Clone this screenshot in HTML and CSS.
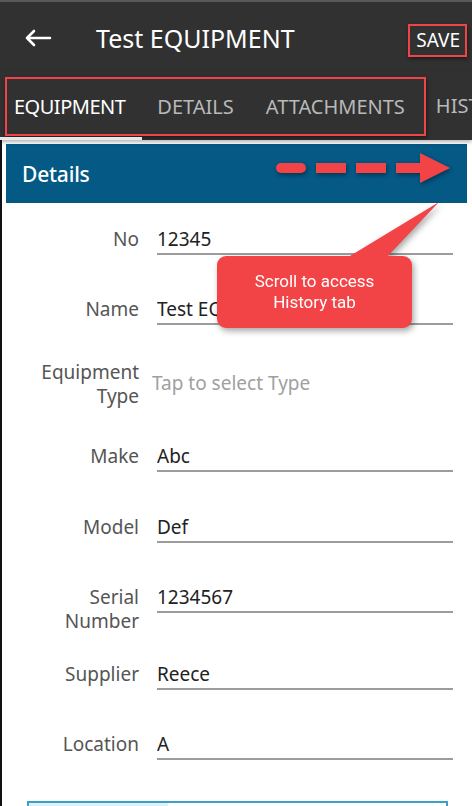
FILE: index.html
```html
<!DOCTYPE html>
<html lang="en">
<head>
  <meta charset="UTF-8" />
  <meta name="viewport" content="width=device-width, initial-scale=1.0"/>
  <title>Test EQUIPMENT</title>
  <link rel="stylesheet" href="styles.css">
</head>
<body>
  <header class="appbar">
    <svg class="back" width="28" height="20" viewBox="0 0 28 20">
      <path d="M3 10H26M10 3L3 10L10 17" fill="none" stroke="#fff" stroke-width="2.6" stroke-linecap="round" stroke-linejoin="round"/>
    </svg>
    <h1 class="title">Test EQUIPMENT</h1>
    <button class="save">SAVE</button>
  </header>

  <nav class="tabs">
    <div class="tabs-marked">
      <span class="tab active">EQUIPMENT</span>
      <span class="tab">DETAILS</span>
      <span class="tab">ATTACHMENTS</span>
    </div>
    <span class="tab">HISTORY</span>
    <div class="indicator"></div>
  </nav>

  <main class="content">
    <section class="panel">
      <h2>Details</h2>
      <svg class="hint-arrow" width="190" height="59" viewBox="0 0 190 59">
        <g fill="#f24346">
          <rect x="6" y="19" width="30" height="10" rx="5"/>
          <rect x="46" y="19" width="30" height="10"/>
          <rect x="86" y="19" width="30" height="10"/>
          <rect x="126" y="19" width="26" height="10"/>
          <polygon points="150,9 180,24 150,39"/>
        </g>
      </svg>
    </section>

    <div class="callout">
      <svg class="callout-tail" width="100" height="60" viewBox="0 0 100 60">
        <polygon points="0,58 94,1 40,58" fill="#f24346"/>
      </svg>
      <p>Scroll to access<br>History tab</p>
    </div>

    <form class="fields">
      <div class="row">
        <label>No</label>
        <div class="value">12345</div>
      </div>
      <div class="row">
        <label>Name</label>
        <div class="value">Test EQUIPMENT</div>
      </div>
      <div class="row type">
        <label>Equipment<br>Type</label>
        <div class="value placeholder">Tap to select Type</div>
      </div>
      <div class="row after-type">
        <label>Make</label>
        <div class="value">Abc</div>
      </div>
      <div class="row wide-gap">
        <label>Model</label>
        <div class="value">Def</div>
      </div>
      <div class="row">
        <label>Serial<br>Number</label>
        <div class="value">1234567</div>
      </div>
      <div class="row short-gap">
        <label>Supplier</label>
        <div class="value">Reece</div>
      </div>
      <div class="row">
        <label>Location</label>
        <div class="value">A</div>
      </div>
    </form>

    <div class="next-card"><div class="next-fill"></div></div>
  </main>
</body>
</html>
```

FILE: styles.css
```css
:root {
  --bar: #313131;
  --mark: #f24346;
  --panel: #045985;
}

html, body {
  height: 806px;
  overflow: hidden;
}

body {
  margin: 0;
  background: #fff;
  font-family: 'Noto Sans', 'Open Sans', sans-serif;
}

.appbar {
  height: 70px;
  border-top: 2px solid #585858;
  background: var(--bar);
  display: flex;
  align-items: center;
  padding: 0 5px 0 24px;
}

.back {
  display: block;
  margin-top: 1px;
}

.title {
  margin: 0 0 0 44px;
  flex: 1;
  font-size: 25px;
  font-weight: normal;
  color: #fff;
  line-height: 30px;
  margin-top: 1px;
}

.save {
  font-family: inherit;
  font-size: 19px;
  line-height: 25px;
  color: #fff;
  background: var(--bar);
  border: 2px solid var(--mark);
  padding: 2px 5px 2px 6px;
  margin-top: 7px;
  box-shadow: 1px 2px 4px rgba(0,0,0,0.45);
}

.tabs {
  position: relative;
  height: 68px;
  background: var(--bar);
  display: flex;
  align-items: center;
  gap: 10px;
  padding-left: 5px;
  overflow: hidden;
  white-space: nowrap;
  box-shadow: 0 2px 4px rgba(0,0,0,0.3);
  z-index: 1;
}

.tabs-marked {
  display: flex;
  gap: 32px;
  height: 55px;
  align-items: center;
  border: 2px solid var(--mark);
  padding: 0 19px 0 7px;
  margin-top: 1px;
  box-shadow: 1px 2px 4px rgba(0,0,0,0.45);
}

.tab {
  font-size: 20px;
  color: #b9b9b9;
  line-height: 26px;
}

.tab.active {
  color: #fff;
  letter-spacing: -0.5px;
}

.indicator {
  position: absolute;
  left: 0;
  bottom: 0;
  width: 142px;
  height: 3px;
  background: #e8e8e8;
}

.content {
  position: relative;
  border-left: 2px solid #111;
  padding-top: 4px;
  min-height: 700px;
}

.panel {
  position: relative;
  height: 59px;
  margin: 0 5px 0 4px;
  background: var(--panel);
  display: flex;
  align-items: center;
}

.panel h2 {
  margin: 0 0 0 16px;
  font-size: 21px;
  font-weight: 500;
  color: #fff;
  letter-spacing: -0.2px;
}

.hint-arrow {
  position: absolute;
  left: 264px;
  top: 0;
  filter: drop-shadow(1px 2px 2px rgba(0,0,0,0.4));
}

.callout {
  position: absolute;
  left: 215px;
  top: 116px;
  width: 195px;
  height: 72px;
  background: var(--mark);
  border-radius: 9px;
  display: flex;
  align-items: center;
  justify-content: center;
  filter: drop-shadow(2px 3px 3px rgba(0,0,0,0.35));
  z-index: 2;
}

.callout-tail {
  position: absolute;
  left: 128px;
  top: -55px;
}

.callout p {
  position: relative;
  margin: 0;
  font-family: Roboto, 'Liberation Sans', sans-serif;
  font-size: 17px;
  line-height: 21px;
  color: #fff;
  text-align: center;
}

.fields {
  margin: 24px 0 0;
  padding-right: 19px;
}

.row {
  display: grid;
  grid-template-columns: 137px 1fr;
  column-gap: 18px;
  align-items: start;
  font-size: 19px;
  line-height: 24px;
}

.row + .row {
  margin-top: 42px;
}

.row.type {
  margin-top: 35px;
  align-items: center;
}

.row.after-type {
  margin-top: 36px;
}

.row.wide-gap {
  margin-top: 43px;
}

.row.short-gap {
  margin-top: 29px;
}

.row label {
  text-align: right;
  color: #555;
}

.value {
  color: #222;
  padding-bottom: 2px;
  border-bottom: 2px solid #9c9c9c;
  white-space: nowrap;
  overflow: hidden;
}

.value.placeholder {
  color: #a0a0a0;
  border-bottom: none;
  margin-left: -5px;
}

.next-card {
  margin: 41px 24px 0 25px;
  height: 40px;
  border: 2px solid #3c9fc6;
  border-bottom: none;
}

.next-fill {
  width: 139px;
  height: 100%;
  background: #dcf1f8;
}
```
